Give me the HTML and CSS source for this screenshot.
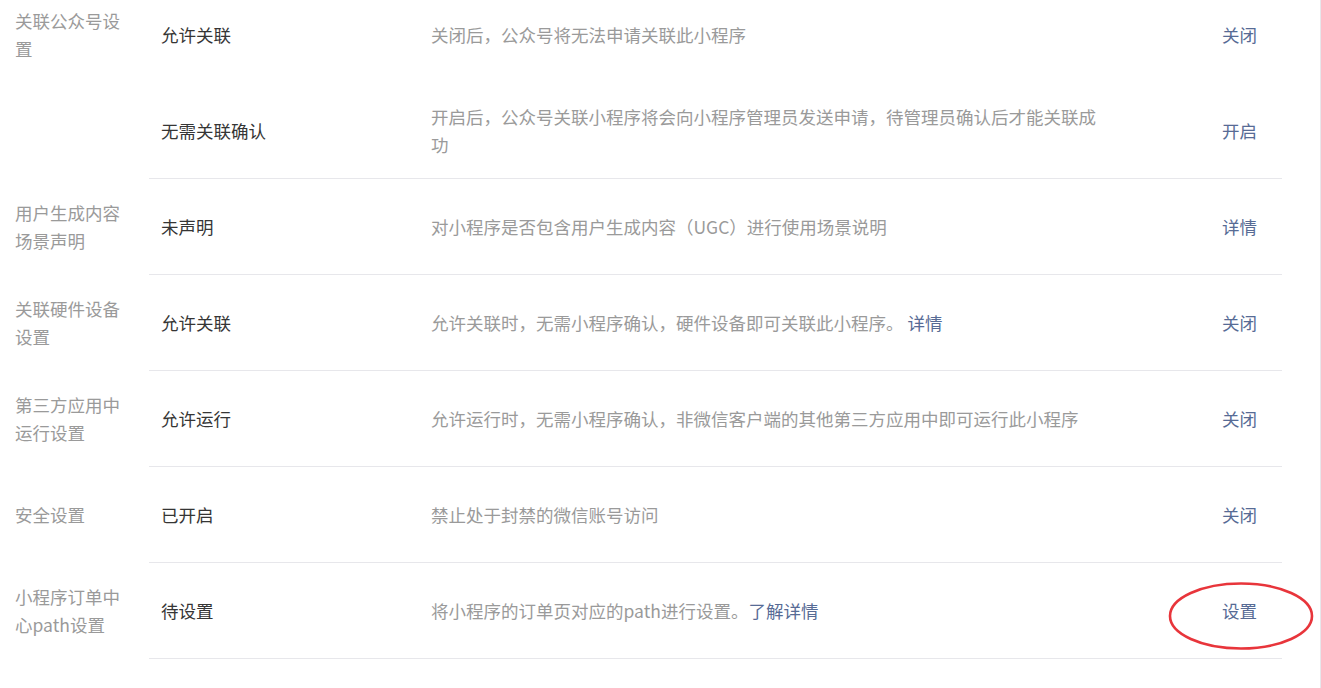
FILE: index.html
```html
<!DOCTYPE html>
<html>
<head>
  <title>功能设置</title>
  <link rel="stylesheet" href="styles.css">
</head>
<body>
  <div class="frame">
    <div class="settings">

      <div class="group">
        <div class="label">关联公众号设置</div>
        <div class="rows">
          <div class="row no-line">
            <div class="status">允许关联</div>
            <div class="desc">关闭后，公众号将无法申请关联此小程序</div>
            <div class="action"><a href="#">关闭</a></div>
          </div>
          <div class="row">
            <div class="status">无需关联确认</div>
            <div class="desc">开启后，公众号关联小程序将会向小程序管理员发送申请，待管理员确认后才能关联成功</div>
            <div class="action"><a href="#">开启</a></div>
          </div>
        </div>
      </div>

      <div class="group">
        <div class="label">用户生成内容场景声明</div>
        <div class="rows">
          <div class="row">
            <div class="status">未声明</div>
            <div class="desc">对小程序是否包含用户生成内容（UGC）进行使用场景说明</div>
            <div class="action"><a href="#">详情</a></div>
          </div>
        </div>
      </div>

      <div class="group">
        <div class="label">关联硬件设备设置</div>
        <div class="rows">
          <div class="row">
            <div class="status">允许关联</div>
            <div class="desc">允许关联时，无需小程序确认，硬件设备即可关联此小程序。 <a href="#">详情</a></div>
            <div class="action"><a href="#">关闭</a></div>
          </div>
        </div>
      </div>

      <div class="group">
        <div class="label">第三方应用中运行设置</div>
        <div class="rows">
          <div class="row">
            <div class="status">允许运行</div>
            <div class="desc">允许运行时，无需小程序确认，非微信客户端的其他第三方应用中即可运行此小程序</div>
            <div class="action"><a href="#">关闭</a></div>
          </div>
        </div>
      </div>

      <div class="group">
        <div class="label">安全设置</div>
        <div class="rows">
          <div class="row">
            <div class="status">已开启</div>
            <div class="desc">禁止处于封禁的微信账号访问</div>
            <div class="action"><a href="#">关闭</a></div>
          </div>
        </div>
      </div>

      <div class="group">
        <div class="label">小程序订单中心path设置</div>
        <div class="rows">
          <div class="row">
            <div class="status">待设置</div>
            <div class="desc">将小程序的订单页对应的path进行设置。<a href="#">了解详情</a></div>
            <div class="action"><a href="#">设置</a></div>
            <!-- hand-drawn highlight -->
            <svg class="mark" width="150" height="72" viewBox="0 0 150 72">
              <ellipse cx="74" cy="35" rx="71" ry="32.5" fill="none" stroke="#e8353b" stroke-width="2.6"/>
            </svg>
          </div>
        </div>
      </div>

    </div>
  </div>
</body>
</html>
```

FILE: styles.css
```css
html, body {
  margin: 0;
  padding: 0;
  background: #fff;
}
body {
  font-family: "Noto Sans CJK SC", "Microsoft YaHei", sans-serif;
  font-size: 17.5px;
  line-height: 28px;
  color: #353535;
}
.frame {
  width: 1320px;
  height: 688px;
  border-right: 1px solid #e7e7eb;
  overflow: hidden;
}
.settings {
  margin-top: -13px;
  padding-left: 15px;
  width: 1267px;
}
.group {
  display: flex;
  align-items: flex-start;
}
.label {
  flex: 0 0 110px;
  display: flex;
  align-items: center;
  min-height: 95px;
  padding-right: 24px;
  color: #9a9a9a;
  word-break: break-all;
}
.rows {
  flex: 1;
}
.row {
  position: relative;
  display: flex;
  align-items: center;
  min-height: 95px;
  padding-left: 12px;
  border-bottom: 1px solid #e7e7eb;
}
.row.no-line {
  border-bottom: none;
  min-height: 96px;
}
.status {
  flex: 0 0 270px;
}
.desc {
  flex: 0 0 670px;
  color: #9a9a9a;
}
.action {
  flex: 1;
  text-align: right;
  padding-right: 25px;
}
a {
  color: #576b95;
  text-decoration: none;
}
.mark {
  position: absolute;
  left: 1018px;
  top: 18px;
}
```
